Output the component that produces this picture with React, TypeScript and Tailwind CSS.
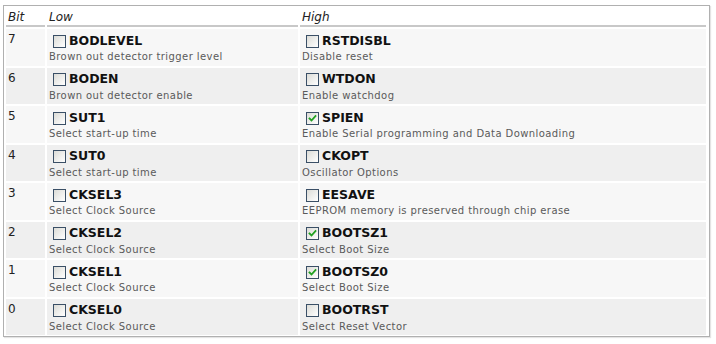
import React from "react";

type Fuse = { name: string; desc: string; checked?: boolean };
const rows: { bit: number; low: Fuse; high: Fuse }[] = [
  { bit: 7, low: { name: "BODLEVEL", desc: "Brown out detector trigger level" }, high: { name: "RSTDISBL", desc: "Disable reset" } },
  { bit: 6, low: { name: "BODEN", desc: "Brown out detector enable" }, high: { name: "WTDON", desc: "Enable watchdog" } },
  { bit: 5, low: { name: "SUT1", desc: "Select start-up time" }, high: { name: "SPIEN", desc: "Enable Serial programming and Data Downloading", checked: true } },
  { bit: 4, low: { name: "SUT0", desc: "Select start-up time" }, high: { name: "CKOPT", desc: "Oscillator Options" } },
  { bit: 3, low: { name: "CKSEL3", desc: "Select Clock Source" }, high: { name: "EESAVE", desc: "EEPROM memory is preserved through chip erase" } },
  { bit: 2, low: { name: "CKSEL2", desc: "Select Clock Source" }, high: { name: "BOOTSZ1", desc: "Select Boot Size", checked: true } },
  { bit: 1, low: { name: "CKSEL1", desc: "Select Clock Source" }, high: { name: "BOOTSZ0", desc: "Select Boot Size", checked: true } },
  { bit: 0, low: { name: "CKSEL0", desc: "Select Clock Source" }, high: { name: "BOOTRST", desc: "Select Reset Vector" } },
];

function Box({ checked }: { checked?: boolean }) {
  return (
    <span className="relative inline-block w-[13px] h-[13px] border border-[#3a4f66] bg-gradient-to-br from-[#dcdcd7] to-[#ffffff] shrink-0">
      {checked && (
        <svg viewBox="0 0 11 11" className="absolute left-0 top-0 w-[11px] h-[11px]">
          <path d="M2.5 5.5 L4.5 7.5 L8.5 3" stroke="#21a121" strokeWidth="1.8" fill="none" strokeLinecap="square" />
        </svg>
      )}
    </span>
  );
}

function Cell({ f, bg }: { f: Fuse; bg: string }) {
  return (
    <div className={`${bg} pl-[2px] pt-[3px]`}>
      <div className="flex items-center gap-[3px] pl-[4px] h-[18px]">
        <Box checked={f.checked} />
        <span className="font-bold text-[12.5px] text-[#111] leading-none">{f.name}</span>
      </div>
      <div className="text-[10px] leading-[13px] text-[#5a5a5a] tracking-[0.42px]">{f.desc}</div>
    </div>
  );
}

export default function App() {
  return (
    <div className="w-[716px] h-[344px] bg-white pt-[5px] pl-[3px]" style={{ fontFamily: '"DejaVu Sans", Verdana, sans-serif' }}>
      <div className="w-[707px] border border-[#b0b0b0] bg-white p-[1px] shadow-[1px_1px_1px_#e4e4e4]">
        <div className="grid grid-cols-[39px_251px_406px] gap-x-[2px] gap-y-[2px] px-[1px] grid-rows-[20px_repeat(8,36.5px)]">
          {["Bit", "Low", "High"].map((h) => (
            <div key={h} className="border-b-2 border-[#c8c8c8] italic text-[12px] text-[#222] pl-[2px] pt-[3px] leading-[15px]">
              {h}
            </div>
          ))}
          {rows.map((r, i) => {
            const bg = i % 2 === 0 ? "bg-[#f7f7f7]" : "bg-[#efefef]";
            return (
              <React.Fragment key={r.bit}>
                <div className={`${bg} pl-[2px] pt-[3px] text-[12px] text-[#222] leading-[15px]`}>{r.bit}</div>
                <Cell f={r.low} bg={bg} />
                <Cell f={r.high} bg={bg} />
              </React.Fragment>
            );
          })}
        </div>
      </div>
    </div>
  );
}
